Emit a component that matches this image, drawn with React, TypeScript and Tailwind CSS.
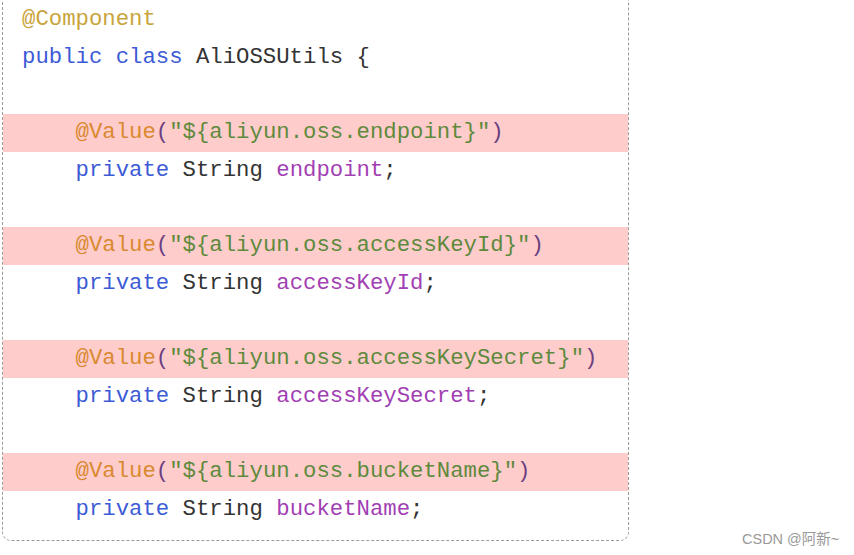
import React from "react";

type Tok = { t: string; c: string };

const K = "text-[#3d5bd6]";
const A1 = "text-[#c9a43c]";
const A2 = "text-[#d9892f]";
const S = "text-[#5e8a3c]";
const P = "text-[#6b3f80]";
const T = "text-[#333333]";
const F = "text-[#a23fb3]";

function valueLine(key: string): Tok[] {
  return [
    { t: "    ", c: T },
    { t: "@Value", c: A2 },
    { t: "(", c: P },
    { t: '"${aliyun.oss.' + key + '}"', c: S },
    { t: ")", c: P },
  ];
}
function fieldLine(name: string): Tok[] {
  return [
    { t: "    ", c: T },
    { t: "private", c: K },
    { t: " String ", c: T },
    { t: name, c: F },
    { t: ";", c: T },
  ];
}

const lines: { toks: Tok[]; hl?: boolean }[] = [
  { toks: [{ t: "@Component", c: A1 }] },
  {
    toks: [
      { t: "public class", c: K },
      { t: " AliOSSUtils {", c: T },
    ],
  },
  { toks: [] },
  { toks: valueLine("endpoint"), hl: true },
  { toks: fieldLine("endpoint") },
  { toks: [] },
  { toks: valueLine("accessKeyId"), hl: true },
  { toks: fieldLine("accessKeyId") },
  { toks: [] },
  { toks: valueLine("accessKeySecret"), hl: true },
  { toks: fieldLine("accessKeySecret") },
  { toks: [] },
  { toks: valueLine("bucketName"), hl: true },
  { toks: fieldLine("bucketName") },
];

export default function App() {
  return (
    <div className="relative w-[854px] h-[555px] bg-white overflow-hidden">
      <div className="ml-[2px] mt-[-20px] w-[627px] border border-dashed border-[#9a9a9a] rounded-b-[9px] pt-[20px] pb-[11px]">
        {lines.map((l, i) => (
          <div
            key={i}
            className={`h-[37.7px] leading-[37.7px] pl-[19px] whitespace-pre text-[22.3px] ${
              l.hl ? "bg-[#ffcccc]" : ""
            }`}
            style={{ fontFamily: '"Liberation Mono", "Courier New", monospace' }}
          >
            {l.toks.map((tk, j) => (
              <span key={j} className={tk.c}>
                {tk.t}
              </span>
            ))}
          </div>
        ))}
      </div>
      <div
        className="absolute left-[742px] top-[530px] text-[14.5px] leading-[18px] text-[#999999]"
        style={{ fontFamily: '"Liberation Sans", "Noto Sans CJK SC", sans-serif' }}
      >
        CSDN @阿新~
      </div>
    </div>
  );
}
